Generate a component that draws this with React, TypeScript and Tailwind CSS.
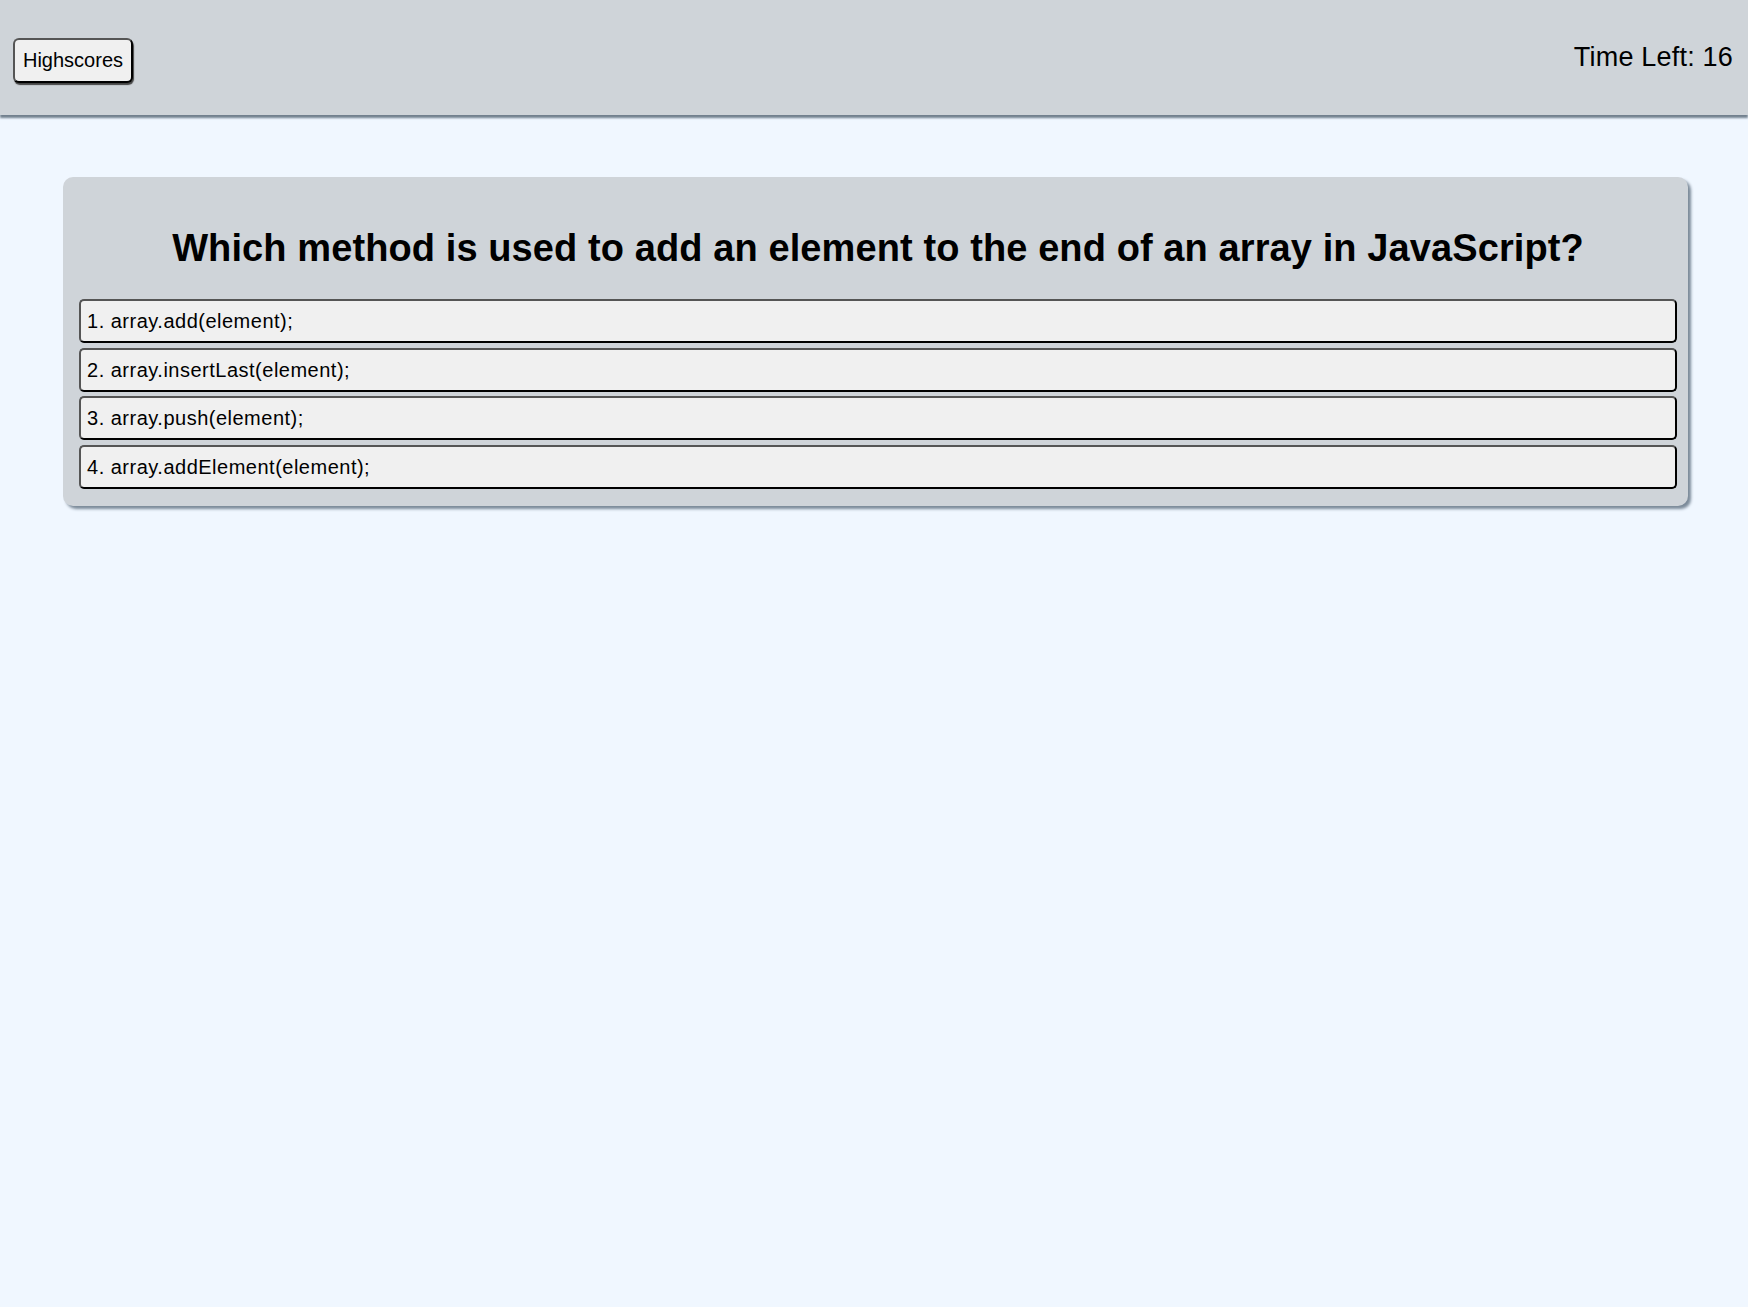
import React from 'react';

const options = [
    'array.add(element);',
    'array.insertLast(element);',
    'array.push(element);',
    'array.addElement(element);'
];

export default function App() {
    return (
        <div className="min-h-screen bg-[#f0f7ff] text-black" style={{ fontFamily: '"Comic Sans MS", "Liberation Sans", sans-serif' }}>
            <header className="h-[115px] bg-[#cfd4d9] flex items-center justify-between pl-[13px] pr-[15px] shadow-[0_3px_2px_#72808e]">
                <button
                    type="button"
                    className="mt-[5px] w-[120px] h-[45px] rounded-[6px] border-2 border-[#555] border-b-black border-r-black bg-[#f0f0f0] text-[20px] shadow-[1px_2px_1px_#444]"
                >
                    Highscores
                </button>
                <div className="text-[27px] tracking-[0.2px]">Time Left: 16</div>
            </header>

            <main className="ml-[63px] mr-[60px] mt-[62px] bg-[#cfd4d9] rounded-[10px] pt-[51px] pb-[17px] pl-[16px] pr-[11px] shadow-[3px_3px_3px_#7b8a99]">
                <h1 className="text-center text-[38px] leading-[40px] font-bold tracking-[0.1px] mb-[31px]">
                    Which method is used to add an element to the end of an array in JavaScript?
                </h1>
                <ol className="flex flex-col gap-[4.5px]">
                    {options.map((opt, i) => (
                        <li key={i}>
                            <button
                                type="button"
                                className="w-full h-[44px] flex items-center px-[6px] rounded-[5px] border-2 border-[#555] border-b-black border-r-black bg-[#f0f0f0] text-[20px] tracking-[0.5px] text-left"
                            >
                                {i + 1}. {opt}
                            </button>
                        </li>
                    ))}
                </ol>
            </main>
        </div>
    );
}
